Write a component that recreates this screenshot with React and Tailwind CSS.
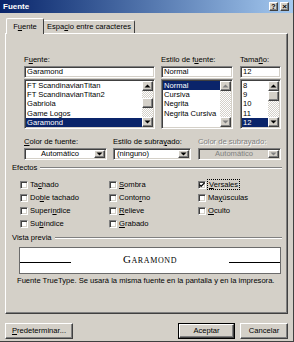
import React from "react";

const RAISED =
  "border border-t-white border-l-white border-r-[#404040] border-b-[#404040] shadow-[inset_-1px_-1px_0_#808080] bg-[#d4d0c8]";
const SUNKEN =
  "border border-t-[#808080] border-l-[#808080] border-r-white border-b-white shadow-[inset_1px_1px_0_#404040,inset_-1px_-1px_0_#d4d0c8]";

const U = ({ children }) => (
  <span className="underline underline-offset-[1px] decoration-[1px]">{children}</span>
);

function Arrow({ dir = "down", disabled = false }) {
  const color = disabled ? "#808080" : "#000";
  return (
    <svg width="7" height="4" viewBox="0 0 7 4" className="block">
      {dir === "down" ? (
        <path d="M0.5 0.5h6L3.5 3.5z" fill={color} />
      ) : (
        <path d="M0.5 3.5h6L3.5 0.5z" fill={color} />
      )}
    </svg>
  );
}

function SBtn({ dir, disabled }) {
  return (
    <div className={`h-[10px] w-full flex items-center justify-center ${RAISED}`}>
      <Arrow dir={dir} disabled={disabled} />
    </div>
  );
}

const TRACK =
  "bg-[repeating-conic-gradient(#ffffff_0_25%,#d4d0c8_0_50%)] bg-[length:2px_2px]";

function Scrollbar({ thumbTop, disabled }) {
  return (
    <div className="w-[11px] h-full flex flex-col">
      <SBtn dir="up" disabled={disabled} />
      <div className={`flex-1 flex flex-col ${TRACK}`}>
        {thumbTop !== undefined && (
          <div className={`h-[10px] w-full ${RAISED}`} style={{ marginTop: thumbTop }} />
        )}
      </div>
      <SBtn dir="down" disabled={disabled} />
    </div>
  );
}

function ListBox({ items, selected, thumbTop, disabled, width }) {
  return (
    <div className={`h-[50px] bg-white flex p-[1px] ${SUNKEN}`} style={{ width }}>
      <div className="flex-1 flex flex-col overflow-hidden">
        {items.map((it, i) => (
          <div
            key={i}
            className={`h-[9.2px] leading-[9.2px] pl-[1px] whitespace-nowrap ${
              i === selected ? "bg-[#0a246a] text-white" : ""
            }`}
          >
            {it}
          </div>
        ))}
      </div>
      <Scrollbar thumbTop={thumbTop} disabled={disabled} />
    </div>
  );
}

function TextBox({ value }) {
  return (
    <div className={`h-[12px] bg-white flex items-center pl-[2px] ${SUNKEN}`}>
      <span className="leading-[8px]">{value}</span>
    </div>
  );
}

function Dropdown({ value, width, center, disabled }) {
  return (
    <div
      className={`h-[12px] flex p-[1px] ${SUNKEN} ${disabled ? "bg-[#d4d0c8]" : "bg-white"}`}
      style={{ width }}
    >
      <div
        className={`flex-1 flex items-center leading-[8px] ${center ? "justify-center" : "pl-[2px]"} ${
          disabled ? "text-[#808080]" : ""
        }`}
      >
        {value}
      </div>
      <div className={`w-[11px] h-full flex items-center justify-center ${RAISED}`}>
        <Arrow dir="down" disabled={disabled} />
      </div>
    </div>
  );
}

function Check({ label, checked, focus }) {
  return (
    <div className="h-[13px] flex items-center">
      <div className={`w-[8px] h-[8px] bg-white flex items-center justify-center ${SUNKEN}`}>
        {checked && (
          <svg width="6" height="6" viewBox="0 0 7 7" className="block">
            <path d="M0.5 3 L2.5 5 L6.5 1" stroke="#000" strokeWidth="1.4" fill="none" />
          </svg>
        )}
      </div>
      <span
        className={`ml-[2px] leading-[9px] ${
          focus ? "outline outline-1 outline-dotted outline-black px-[1px]" : ""
        }`}
      >
        {label}
      </span>
    </div>
  );
}

function GroupHeader({ children }) {
  return (
    <div className="h-[10px] flex items-center pl-[6px] pr-[5px]">
      <span className="leading-[10px]">{children}</span>
      <div className="flex-1 ml-[3px] flex flex-col">
        <div className="h-px bg-[#808080]" />
        <div className="h-px bg-white" />
      </div>
    </div>
  );
}

export default function App() {
  return (
    <div className="w-[294px] h-[342px] bg-[#d4d0c8] overflow-hidden font-['Liberation_Sans',Arial,sans-serif] text-[7.6px] leading-[10px] text-black flex flex-col border-r border-b border-r-[#404040] border-b-[#404040]">
      {/* Title bar */}
      <div className="h-[13px] shrink-0 flex items-center pl-[3px] pr-[4px] bg-linear-to-r from-[#0a246a] to-[#a6caf0]">
        <span className="flex-1 text-white font-bold text-[8px] leading-[10px]">Fuente</span>
        <div className="flex gap-[2px]">
          <div className={`w-[9px] h-[9px] flex items-center justify-center text-[7px] font-bold leading-none ${RAISED}`}>?</div>
          <div className={`w-[9px] h-[9px] flex items-center justify-center text-[8px] font-bold leading-none ${RAISED}`}>×</div>
        </div>
      </div>

      <div className="flex-1 flex flex-col px-[5px]">
        {/* Tabs */}
        <div className="mt-[5px] h-[15px] flex items-end pl-[1px]">
          <div className="relative z-10 -mb-px h-[16px] w-[38px] bg-[#d4d0c8] border-t border-l border-r border-t-white border-l-white border-r-[#404040] rounded-t-[2px] flex items-center justify-center pt-[1px]">
            <span>
              F<U>u</U>ente
            </span>
          </div>
          <div className="h-[13px] w-[91px] border-t border-r border-t-white border-r-[#404040] rounded-tr-[2px] flex items-center justify-center">
            <span>
              Espa<U>c</U>io entre caracteres
            </span>
          </div>
        </div>

        {/* Panel */}
        <div className="h-[281px] flex flex-col border border-t-white border-l-white border-r-[#404040] border-b-[#404040] shadow-[inset_-1px_-1px_0_#808080]">
          {/* Row 1 */}
          <div className="mt-[21px] pl-[18px] flex">
            <div className="w-[131px] flex flex-col">
              <div className="h-[10px]">
                F<U>u</U>ente:
              </div>
              <div className="mt-[1px]">
                <TextBox value="Garamond" />
              </div>
              <div className="mt-[1px]">
                <ListBox
                  width={131}
                  items={["FT ScandinavianTitan", "FT ScandinavianTitan2", "Gabriola", "Game Logos", "Garamond"]}
                  selected={4}
                  thumbTop={7}
                />
              </div>
            </div>
            <div className="ml-[6px] w-[72px] flex flex-col">
              <div className="h-[10px]">
                Estilo de f<U>u</U>ente:
              </div>
              <div className="mt-[1px]">
                <TextBox value="Normal" />
              </div>
              <div className="mt-[1px]">
                <ListBox
                  width={72}
                  items={["Normal", "Cursiva", "Negrita", "Negrita Cursiva"]}
                  selected={0}
                  disabled
                />
              </div>
            </div>
            <div className="ml-[7px] w-[41px] flex flex-col">
              <div className="h-[10px]">
                Tama<U>ñ</U>o:
              </div>
              <div className="mt-[1px]">
                <TextBox value="12" />
              </div>
              <div className="mt-[1px]">
                <ListBox width={41} items={["8", "9", "10", "11", "12"]} selected={4} thumbTop={0} />
              </div>
            </div>
          </div>

          {/* Row 2 */}
          <div className="mt-[8px] pl-[18px] flex">
            <div className="w-[83px] flex flex-col">
              <div className="h-[10px]">
                <U>C</U>olor de fuente:
              </div>
              <div className="mt-[1px]">
                <Dropdown value="Automático" width={83} center />
              </div>
            </div>
            <div className="ml-[6px] w-[78px] flex flex-col">
              <div className="h-[10px]">
                Estilo de subra<U>y</U>ado:
              </div>
              <div className="mt-[1px]">
                <Dropdown value="(ninguno)" width={78} />
              </div>
            </div>
            <div className="ml-[7px] w-[83px] flex flex-col">
              <div className="h-[10px] text-[#808080] [text-shadow:1px_1px_0_#fff]">Color de subrayado:</div>
              <div className="mt-[1px]">
                <Dropdown value="Automático" width={83} center disabled />
              </div>
            </div>
          </div>

          {/* Efectos */}
          <div className="mt-[3px]">
            <GroupHeader>Efectos</GroupHeader>
          </div>
          <div className="mt-[5px] pl-[14px] flex">
            <div className="w-[89px] flex flex-col">
              <Check label={<>Ta<U>c</U>hado</>} />
              <Check label={<>Do<U>b</U>le tachado</>} />
              <Check label={<>Superí<U>n</U>dice</>} />
              <Check label={<>Su<U>b</U>índice</>} />
            </div>
            <div className="w-[89px] flex flex-col">
              <Check label={<><U>S</U>ombra</>} />
              <Check label={<>Conto<U>r</U>no</>} />
              <Check label={<><U>R</U>elieve</>} />
              <Check label={<><U>G</U>rabado</>} />
            </div>
            <div className="flex flex-col">
              <Check label={<><U>V</U>ersales</>} checked focus />
              <Check label={<>Ma<U>y</U>úsculas</>} />
              <Check label={<><U>O</U>culto</>} />
            </div>
          </div>

          {/* Vista previa */}
          <div className="mt-[3px]">
            <GroupHeader>Vista previa</GroupHeader>
          </div>
          <div className="mt-[4px] ml-[13px] w-[262px] h-[27px] bg-white border border-[#6b6b6b]">
            <div className="pt-[6px] flex items-baseline justify-between">
              <div className="w-[51px] h-px bg-black" />
              <span className="font-['Liberation_Serif','Times_New_Roman',serif] text-[11px] leading-[11px] [font-variant:small-caps] tracking-[0.6px]">
                Garamond
              </span>
              <div className="w-[51px] h-px bg-black" />
            </div>
          </div>
          <div className="mt-[2px] ml-[11px] h-[10px] whitespace-nowrap">
            Fuente TrueType. Se usará la misma fuente en la pantalla y en la impresora.
          </div>
        </div>

        {/* Buttons */}
        <div className="mt-[9px] h-[16px] flex">
          <div className={`w-[68px] h-[16px] flex items-center justify-center ${RAISED}`}>
            <span>
              <U>P</U>redeterminar...
            </span>
          </div>
          <div className="flex-1" />
          <div className="w-[57px] h-[16px] border border-black">
            <div className={`w-full h-full flex items-center justify-center ${RAISED}`}>Aceptar</div>
          </div>
          <div className={`ml-[5px] w-[48px] h-[16px] flex items-center justify-center ${RAISED}`}>Cancelar</div>
        </div>
      </div>
    </div>
  );
}
